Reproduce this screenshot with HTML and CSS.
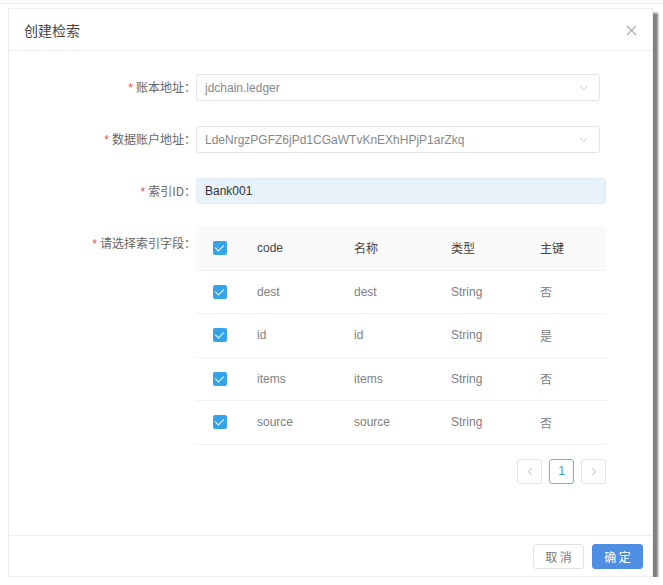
FILE: index.html
```html
<!DOCTYPE html>
<html lang="zh">
<head>
<meta charset="utf-8">
<title>创建检索</title>
<link rel="stylesheet" href="styles.css">
</head>
<body>
<div class="topline"></div>
<div class="dialog">
  <div class="dialog-header">
    <span class="dialog-title">创建检索</span>
    <span class="close">
      <svg width="11" height="11" viewBox="0 0 11 11"><path d="M1 1L10 10M10 1L1 10" stroke="#aaa" stroke-width="1.1" fill="none"/></svg>
    </span>
  </div>
  <div class="dialog-body">
    <div class="form-row">
      <label class="label"><span class="req">*</span>账本地址：</label>
      <div class="control select">
        <span class="value muted">jdchain.ledger</span>
        <svg class="arrow" width="9" height="6" viewBox="0 0 9 6"><path d="M1 1L4.5 4.5L8 1" stroke="#ccc" stroke-width="1" fill="none"/></svg>
      </div>
    </div>
    <div class="form-row">
      <label class="label"><span class="req">*</span>数据账户地址：</label>
      <div class="control select">
        <span class="value muted">LdeNrgzPGFZ6jPd1CGaWTvKnEXhHPjP1arZkq</span>
        <svg class="arrow" width="9" height="6" viewBox="0 0 9 6"><path d="M1 1L4.5 4.5L8 1" stroke="#ccc" stroke-width="1" fill="none"/></svg>
      </div>
    </div>
    <div class="form-row">
      <label class="label"><span class="req">*</span>索引ID：</label>
      <div class="control input wide">
        <span class="value">Bank001</span>
      </div>
    </div>
    <div class="form-row top">
      <label class="label lbl-table"><span class="req">*</span>请选择索引字段：</label>
      <div class="table-wrap">
        <table class="fields">
          <colgroup>
            <col class="c-check"><col class="c-code"><col class="c-name"><col class="c-type"><col>
          </colgroup>
          <thead>
            <tr><th><span class="cb"></span></th><th>code</th><th>名称</th><th>类型</th><th>主键</th></tr>
          </thead>
          <tbody>
            <tr><td><span class="cb"></span></td><td>dest</td><td>dest</td><td>String</td><td>否</td></tr>
            <tr><td><span class="cb"></span></td><td>id</td><td>id</td><td>String</td><td>是</td></tr>
            <tr><td><span class="cb"></span></td><td>items</td><td>items</td><td>String</td><td>否</td></tr>
            <tr><td><span class="cb"></span></td><td>source</td><td>source</td><td>String</td><td>否</td></tr>
          </tbody>
        </table>
        <div class="pager">
          <span class="pg">
            <svg width="6" height="9" viewBox="0 0 6 9"><path d="M4.5 1L1.5 4.5L4.5 8" stroke="#bbb" stroke-width="1" fill="none"/></svg>
          </span>
          <span class="pg active">1</span>
          <span class="pg">
            <svg width="6" height="9" viewBox="0 0 6 9"><path d="M1.5 1L4.5 4.5L1.5 8" stroke="#bbb" stroke-width="1" fill="none"/></svg>
          </span>
        </div>
      </div>
    </div>
  </div>
  <div class="dialog-footer">
    <button class="btn">取 消</button>
    <button class="btn primary">确 定</button>
  </div>
</div>
</body>
</html>
```
FILE: styles.css
```css
* { box-sizing: border-box; }
html, body {
  margin: 0;
  padding: 0;
  background: #fff;
  font-family: "Liberation Sans", "Noto Sans CJK SC", sans-serif;
  font-size: 12px;
  color: #666;
}
.topline {
  height: 4px;
  border-bottom: 1px solid #ededed;
  background: #fcfcfc;
}
.dialog {
  margin: 4px 0 0 8px;
  width: 645px;
  height: 569px;
  background: #fff;
  border: 1px solid #eee;
  box-shadow: 5px 5px 2px rgba(60, 60, 60, 0.65);
  display: flex;
  flex-direction: column;
}
.dialog-header {
  height: 42px;
  flex: none;
  display: flex;
  align-items: center;
  justify-content: space-between;
  padding: 0 15px 0 15px;
  border-bottom: 1px solid #ececec;
}
.dialog-title {
  font-size: 14px;
  color: #444;
  font-family: "Noto Sans CJK SC", sans-serif;
}
.close { display: flex; margin-top: 1px; }
.dialog-body {
  flex: 1;
  padding-top: 23px;
}
.form-row {
  display: flex;
  align-items: center;
  margin-bottom: 25px;
}
.form-row.top { align-items: flex-start; }
.label {
  width: 187px;
  flex: none;
  text-align: right;
  padding-right: 0;
  color: #666;
  font-family: "Noto Sans CJK SC", sans-serif;
  font-size: 12px;
  line-height: 16px;
  white-space: nowrap;
}
.lbl-table { padding-top: 6px; }
.req {
  color: #e0505a;
  margin-right: 3px;
  font-family: "Liberation Sans", sans-serif;
}
.control {
  height: 27px;
  width: 404px;
  border: 1px solid #e4e4e4;
  border-radius: 3px;
  display: flex;
  align-items: center;
  justify-content: space-between;
  padding: 0 11px 0 8px;
  color: #333;
}
.control.wide {
  width: 410px;
  background: #e8f2fb;
  border-color: #e1ebf4;
  height: 26px;
}
.value.muted { color: #888; }
.arrow { flex: none; }
.table-wrap {
  width: 410px;
  margin-top: -3px;
}
.fields {
  width: 100%;
  border-collapse: collapse;
  table-layout: fixed;
}
.c-check { width: 45px; }
.c-code { width: 97px; }
.c-name { width: 97px; }
.c-type { width: 89px; }
.fields th, .fields td {
  height: 44px;
  padding: 0 0 0 16px;
  text-align: left;
  font-weight: normal;
  border-bottom: 1px solid #f0f0f0;
  font-family: "Liberation Sans", "Noto Sans CJK SC", sans-serif;
}
.fields td { height: 43.5px; }
.fields th { background: #fafafa; color: #444; }
.fields td { color: #808080; }
.fields th:first-child, .fields td:first-child { padding-left: 17px; }
.cb {
  display: block;
  width: 14px;
  height: 14px;
  border-radius: 2px;
  background: #34a3e8;
  position: relative;
}
.cb::after {
  content: "";
  position: absolute;
  left: 4px;
  top: 2px;
  width: 4px;
  height: 7px;
  border: solid #fff;
  border-width: 0 1.5px 1.5px 0;
  transform: rotate(45deg);
}
.pager {
  display: flex;
  justify-content: flex-end;
  gap: 7px;
  margin-top: 14px;
}
.pg {
  width: 25px;
  height: 25px;
  border: 1px solid #e2e2e2;
  border-radius: 3px;
  display: flex;
  align-items: center;
  justify-content: center;
  color: #3a9bc8;
  font-size: 12px;
}
.pg.active { border-color: #6bb3cf; }
.dialog-footer {
  flex: none;
  height: 41px;
  border-top: 1px solid #eee;
  display: flex;
  justify-content: flex-end;
  align-items: center;
  gap: 8px;
  padding: 0 9px 0 0;
}
.btn {
  width: 51px;
  height: 25px;
  border: 1px solid #e2e2e2;
  border-radius: 3px;
  background: #fff;
  color: #777;
  font-size: 12px;
  font-family: "Noto Sans CJK SC", sans-serif;
  padding: 0;
}
.btn.primary {
  background: #4f8fe3;
  border-color: #4f8fe3;
  color: #fff;
}
```
